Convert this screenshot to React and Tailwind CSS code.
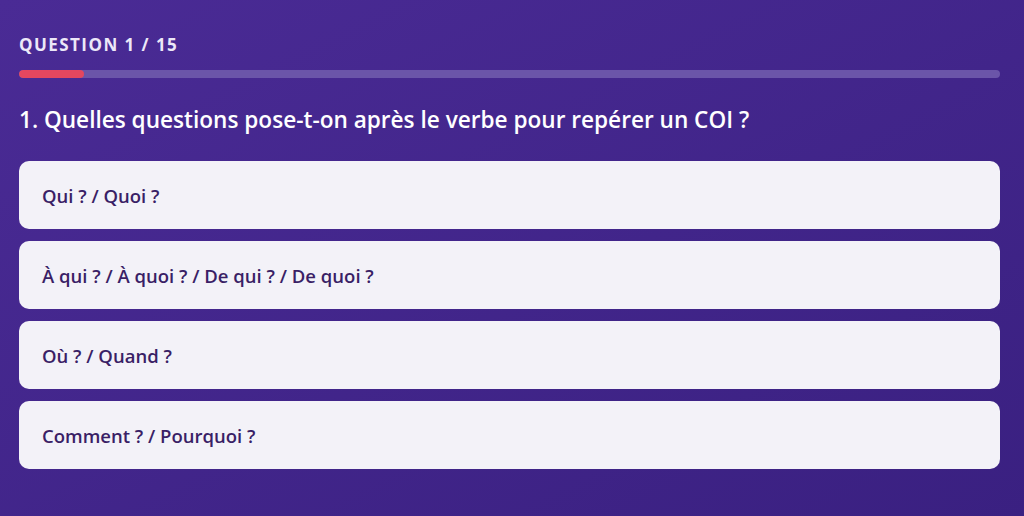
import React from 'react';

const options = [
  'Qui ? / Quoi ?',
  'À qui ? / À quoi ? / De qui ? / De quoi ?',
  'Où ? / Quand ?',
  'Comment ? / Pourquoi ?',
];

const App = () => {
  const current = 1;
  const total = 15;

  return (
    <div
      className="min-h-screen w-full bg-gradient-to-br from-[#4a2b95] to-[#3a2081] px-[19px] pt-[34px] pb-10"
      style={{ fontFamily: '"Open Sans", "Noto Sans", sans-serif' }}
    >
      <div className="w-[981px]">
        {/* Header */}
        <div className="text-[17px] font-bold tracking-[0.085em] text-[#ece8f8] leading-[22px]">
          QUESTION {current} / {total}
        </div>

        {/* Progress */}
        <div className="mt-[14px] h-[8px] w-full rounded-full bg-[#6b55a9] overflow-hidden">
          <div className="h-full rounded-full bg-[#e4475f]" style={{ width: `${(current / total) * 100}%` }} />
        </div>

        {/* Question */}
        <h2 className="mt-[27px] text-[22.6px] font-semibold text-white leading-[30px]">
          1. Quelles questions pose-t-on après le verbe pour repérer un COI ?
        </h2>

        {/* Options */}
        <div className="mt-[26px] flex flex-col gap-[12px]">
          {options.map((opt) => (
            <button
              key={opt}
              className="h-[68px] w-full rounded-[10px] bg-[#f3f2f8] px-[23px] pt-[2px] text-left text-[18.5px] font-semibold text-[#3a1f66]"
            >
              {opt}
            </button>
          ))}
        </div>
      </div>
    </div>
  );
};

export default App;
